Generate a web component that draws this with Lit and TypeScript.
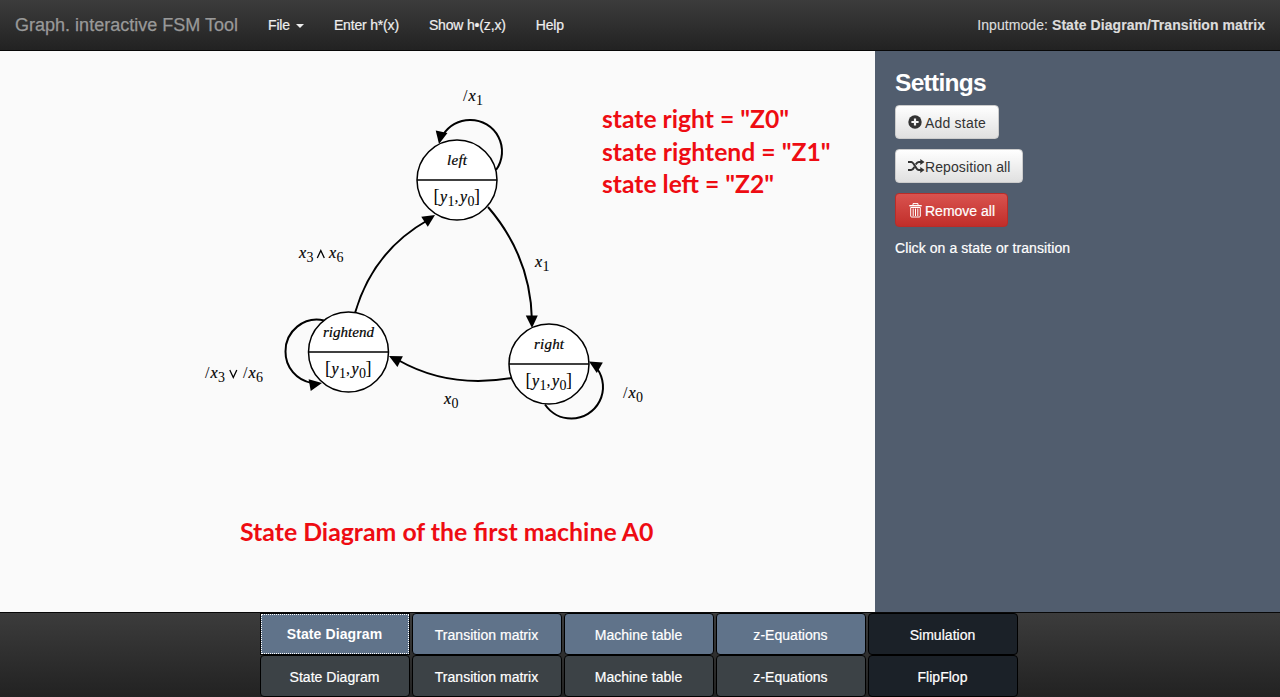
import { LitElement, html, svg, css } from "lit";
import { customElement } from "lit/decorators.js";

const plusIcon = html`<svg width="14" height="14" viewBox="0 0 14 14"><circle cx="7" cy="7" r="6.7" fill="#333"/><path d="M7 3.400v7.200M3.400 7h7.200" stroke="#f4f4f4" stroke-width="2.200"/></svg>`;
const shuffleIcon = html`<svg width="17" height="14" viewBox="0 0 17 14"><g fill="none" stroke="#333" stroke-width="2"><path d="M0 3h3.200c3 0 4.600 8 7.600 8H13"/><path d="M0 11h3.200c1.300 0 2.300-1.300 3.200-3M7.700 5.500C8.600 4 9.500 3 10.800 3H13"/></g><path d="M12.300 0L16.500 3l-4.200 3zM12.300 8L16.500 11l-4.200 3z" fill="#333"/></svg>`;
const trashIcon = html`<svg width="13" height="15" viewBox="0 0 13 15"><g fill="none" stroke="#fff"><path d="M4 2V.6h5V2" /><path d="M.3 2.700h12.400" stroke-width="1.400"/><path d="M1.700 4.500V13q0 1 1 1h7.600q1 0 1-1V4.500z"/><path d="M4.200 5.500v7.500M6.500 5.500v7.500M8.800 5.500v7.500"/></g></svg>`;

@customElement("tool-navbar")
class ToolNavbar extends LitElement {
  static styles = css`
    :host { display: flex; height: 50px; align-items: center; padding: 0 15px; border-bottom: 1px solid #080808; background: linear-gradient(#3c3c3c, #222); color: #eee; font-size: 14px; white-space: nowrap; }
    .brand { font-size: 18px; color: #999; width: 223px; margin-right: 15px; letter-spacing: 0.01px; -webkit-text-stroke: 0.25px #999; }
    nav { display: flex; flex: 1; -webkit-text-stroke: 0.2px #eee; }
    .item { padding: 0 15px; letter-spacing: -0.17px; }
    .caret { display: inline-block; margin-left: 6px; vertical-align: middle; border: 4px solid transparent; border-top-color: #eee; border-bottom: 0; }
    .mode { letter-spacing: 0.07px; color: #ddd; -webkit-text-stroke: 0.15px #ddd; }
  `;
  render() {
    return html`<span class="brand">Graph. interactive FSM Tool</span>
      <nav><span class="item">File<i class="caret"></i></span><span class="item">Enter h*(x)</span><span class="item">Show h•(z,x)</span><span class="item">Help</span></nav>
      <span class="mode">Inputmode: <b>State Diagram/Transition matrix</b></span>`;
  }
}

interface StateNode { x: number; y: number; name: string; width: number; }
const states: StateNode[] = [
  { x: 457, y: 129, name: "left", width: 20 },
  { x: 549, y: 313, name: "right", width: 30 },
  { x: 348.5, y: 301, name: "rightend", width: 51 },
];
const edges = [
  "M496 119A31.500 31.500 0 0 0 470 69A31.500 31.500 0 0 0 443 84",
  "M488 156Q531 206 532 270",
  "M512 327Q449 338 398 309",
  "M355 262Q373 200 428 169",
  "M545 353.500A31.800 31.800 0 0 0 571.500 367.500A31.500 31.500 0 0 0 597 317.500",
  "M324 269.400A31.500 31.500 0 0 0 285.500 300.500A31.500 31.500 0 0 0 312 332",
];
const heads = [
  { x: 439, y: 93, angle: 102 },
  { x: 532, y: 277, angle: 89 },
  { x: 389, y: 305, angle: 207 },
  { x: 435, y: 164, angle: -33 },
  { x: 589, y: 310.5, angle: 210 },
  { x: 322, y: 332, angle: -10 },
];

@customElement("state-diagram")
class StateDiagram extends LitElement {
  static styles = css`
    :host { display: block; width: 875px; background: #fafafa; }
    svg { display: block; }
    .edge { fill: none; stroke: #000; stroke-width: 2; }
    .op { fill: none; stroke: #000; stroke-width: 1.3; }
    .node { fill: #fff; stroke: #000; stroke-width: 1.5; }
    .math { font: 16px "Liberation Serif", serif; }
    .sub { font: 14px "Liberation Serif", serif; }
    .bracket { font: 18px "Liberation Serif", serif; }
    .name { font: italic 15px "Liberation Serif", serif; text-anchor: middle; stroke: #000; stroke-width: 0.2px; }
    .var { font-style: italic; stroke: #000; stroke-width: 0.2px; }
    .note { font: bold 25px Lato, sans-serif; fill: #ee0c12; }
  `;
  v(name: string, sub: string, x: number, y: number) {
    return svg`<text class="math var" x=${x} y=${y}>${name}</text><text class="sub" x=${x + 7.5} y=${y + 4}>${sub}</text>`;
  }
  render() {
    return html`<svg width="875" height="561" viewBox="0 0 875 561">
      ${edges.map((d) => svg`<path class="edge" d=${d}/>`)}
      ${states.map((s) => svg`<circle class="node" cx=${s.x} cy=${s.y} r="40"/><path class="node" d="M${s.x - 40} ${s.y}h80"/>
        <text class="name" x=${s.x} y=${s.y - 15} textLength=${s.width}>${s.name}</text>
        <text class="bracket" x=${s.x - 23.5} y=${s.y + 22}>[</text>${this.v("y", "1", s.x - 17, s.y + 22)}
        <text class="math" x=${s.x - 2.5} y=${s.y + 22}>,</text>${this.v("y", "0", s.x + 3, s.y + 22)}<text class="bracket" x=${s.x + 17} y=${s.y + 22}>]</text>`)}
      ${heads.map((h) => svg`<path d="M0 0L-12.500 -6V6z" transform="translate(${h.x} ${h.y}) rotate(${h.angle})"/>`)}
      <text class="math" x="463" y="50">/</text>${this.v("x", "1", 468.5, 50)}
      ${this.v("x", "1", 535, 216)}
      ${this.v("x", "0", 444, 353)}
      <text class="math" x="623" y="347">/</text>${this.v("x", "0", 628.5, 347)}
      ${this.v("x", "3", 299, 207)}<path class="op" d="M317.300 207l3.500-7.500 3.500 7.500"/>${this.v("x", "6", 329, 207)}
      <text class="math" x="205" y="327">/</text>${this.v("x", "3", 210.5, 327)}<path class="op" d="M229.800 319l3.500 7.500 3.500-7.500"/><text class="math" x="243" y="327">/</text>${this.v("x", "6", 248.5, 327)}
      <text class="note" x="602" y="77" textLength="187" lengthAdjust="spacingAndGlyphs">state right = "Z0"</text>
      <text class="note" x="602" y="110" textLength="228.500" lengthAdjust="spacingAndGlyphs">state rightend = "Z1"</text>
      <text class="note" x="602" y="142" textLength="172" lengthAdjust="spacingAndGlyphs">state left = "Z2"</text>
      <text class="note" x="240" y="490" textLength="413.500" lengthAdjust="spacingAndGlyphs">State Diagram of the first machine A0</text>
    </svg>`;
  }
}

@customElement("settings-panel")
class SettingsPanel extends LitElement {
  static styles = css`
    :host { display: flex; flex: 1; flex-direction: column; align-items: flex-start; box-sizing: border-box; padding: 18px 20px; background: #515d6e; color: #fff; font-size: 14px; }
    h1 { margin: 0 0 8px; font-size: 24.5px; line-height: 28px; letter-spacing: -0.7px; }
    button { display: flex; align-items: center; box-sizing: border-box; height: 34px; margin: 0 0 10px; padding: 2px 12px 0; border: 1px solid #ccc; border-radius: 4px; background: linear-gradient(#fff, #e0e0e0); font: 14px "Liberation Sans", sans-serif; color: #333; white-space: nowrap; }
    .add { width: 104px; gap: 3px; letter-spacing: 0.2px; }
    .shuffle { width: 128px; gap: 0; letter-spacing: 0.1px; }
    .remove { width: 113px; gap: 3px; padding-left: 13px; background: linear-gradient(#d9534f, #c12e2a); border-color: #b92c28; color: #fff; -webkit-text-stroke: 0.2px #fff; }
    svg { flex: none; position: relative; top: -1px; }
    p { margin: 1px 0 0; line-height: 20px; letter-spacing: 0.08px; -webkit-text-stroke: 0.2px #fff; }
  `;
  render() {
    return html`<h1>Settings</h1><button class="add">${plusIcon}<span>Add state</span></button><button class="shuffle">${shuffleIcon}<span>Reposition all</span></button><button class="remove">${trashIcon}<span>Remove all</span></button><p>Click on a state or transition</p>`;
  }
}

@customElement("view-tabs")
class ViewTabs extends LitElement {
  static styles = css`
    :host { display: flex; justify-content: center; box-sizing: border-box; height: 85px; border-top: 1px solid #080808; background: linear-gradient(#3c3c3c, #222); padding-right: 2px; }
    .grid { display: grid; grid-template-columns: repeat(5, 150px); grid-auto-rows: 42px; column-gap: 2px; }
    .tab { display: flex; align-items: center; justify-content: center; box-sizing: border-box; border: 1px solid #000; border-radius: 4px; padding: 2px 1px 0 0; color: #fff; font-size: 14px; letter-spacing: 0.03px; -webkit-text-stroke: 0.2px #fff; }
    .input { background: #60738a; }
    .view { background: #3c4246; }
    .run { background: #1b2128; }
    .active { font-weight: bold; letter-spacing: 0.1px; padding-top: 0; border-radius: 0; outline: 1px dotted #fff; outline-offset: -2px; -webkit-text-stroke: 0; }
  `;
  render() {
    const names = ["State Diagram", "Transition matrix", "Machine table", "z-Equations"];
    return html`<div class="grid">${names.map((n, i) => html`<div class="tab input ${i === 0 ? "active" : ""}">${n}</div>`)}<div class="tab run">Simulation</div>
      ${names.map((n) => html`<div class="tab view">${n}</div>`)}<div class="tab run">FlipFlop</div></div>`;
  }
}

@customElement("app-root")
class AppRoot extends LitElement {
  static styles = css`
    :host { display: flex; flex-direction: column; height: 697px; overflow: hidden; font-family: "Liberation Sans", Arial, sans-serif; }
    main { display: flex; height: 561px; }
  `;
  render() {
    return html`<tool-navbar></tool-navbar><main><state-diagram></state-diagram><settings-panel></settings-panel></main><view-tabs></view-tabs>`;
  }
}
